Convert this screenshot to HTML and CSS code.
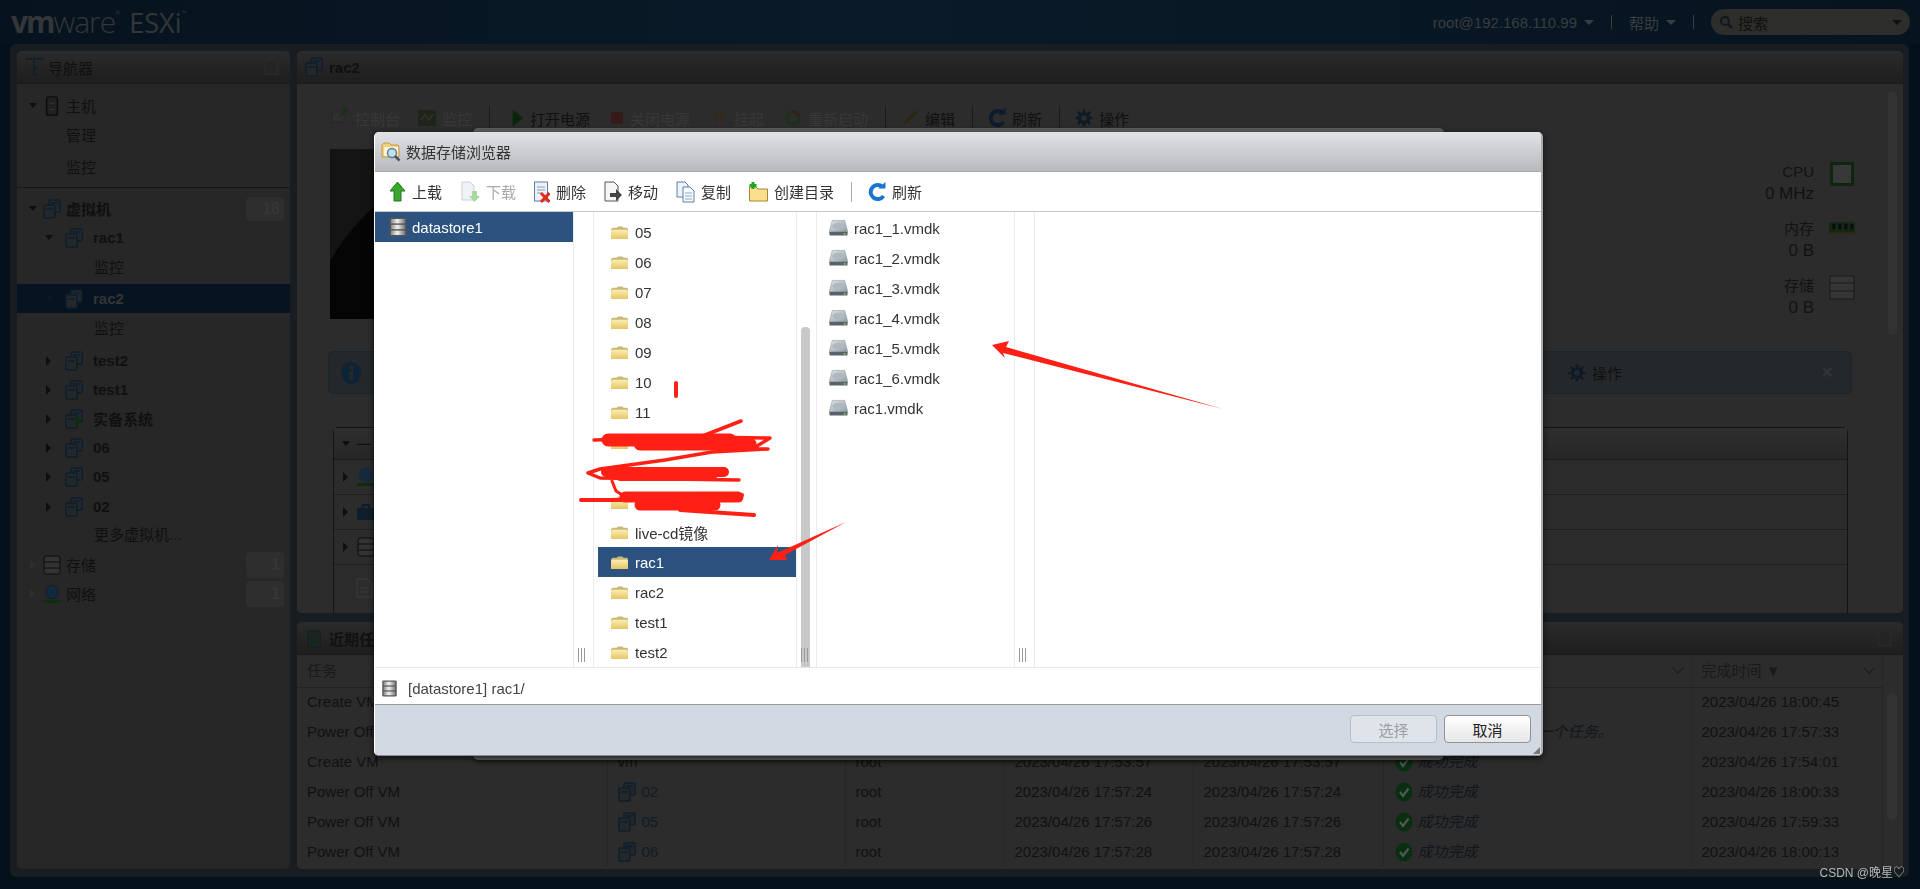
FILE: index.html
```html
<!DOCTYPE html>
<html lang="zh-CN">
<head>
    <meta charset="UTF-8">
    <meta name="viewport" content="width=device-width, initial-scale=1.0">
    <title>vmware ESXi</title>
    <link rel="stylesheet" href="styles.css">
</head>
<body>
    <!-- shared icons -->
    <svg class="icon-defs" width="0" height="0">
        <defs>
            <linearGradient id="g-folder" x1="0" y1="0" x2="0" y2="1">
                <stop offset="0" stop-color="#fbeeb0"/>
                <stop offset="1" stop-color="#e6c566"/>
            </linearGradient>
            <linearGradient id="g-disk" x1="0" y1="0" x2="1" y2="1">
                <stop offset="0" stop-color="#dfe4e7"/>
                <stop offset="1" stop-color="#8e9aa3"/>
            </linearGradient>
            <linearGradient id="g-store" x1="0" y1="0" x2="1" y2="0">
                <stop offset="0" stop-color="#8a8a8a"/>
                <stop offset="0.45" stop-color="#f2f2f2"/>
                <stop offset="1" stop-color="#777"/>
            </linearGradient>
            <symbol id="i-folder" viewBox="0 0 20 16">
                <path d="M1 15V4.500L2.500 3H7L8.500 1.500H13L14.500 3H18L19 4V15Z" fill="#c9b878"/>
                <path d="M1 15V6.500L2 5H18L19 6.500V15Z" fill="url(#g-folder)"/>
            </symbol>
            <symbol id="i-disk" viewBox="0 0 20 18">
                <path d="M3.500 1H16.500L19.500 12V14H0.500V12Z" fill="url(#g-disk)" stroke="#8a949b" stroke-width="0.600"/>
                <ellipse cx="10" cy="7" rx="6.500" ry="3.500" fill="#aeb8bf"/>
                <rect x="0.500" y="13" width="19" height="4" rx="1" fill="#59626a"/>
                <rect x="15.500" y="14.500" width="2" height="1.500" fill="#7ed257"/>
            </symbol>
            <symbol id="i-store" viewBox="0 0 18 20">
                <rect x="0.500" y="0.500" width="17" height="19" rx="1.500" fill="#555"/>
                <rect x="2" y="2" width="14" height="4.400" fill="url(#g-store)"/>
                <rect x="2" y="7.800" width="14" height="4.400" fill="url(#g-store)"/>
                <rect x="2" y="13.600" width="14" height="4.400" fill="url(#g-store)"/>
            </symbol>
            <symbol id="i-vm" viewBox="0 0 18 20">
                <rect x="6" y="1" width="11" height="12" rx="1" fill="#23282b" stroke="#0f1e2c" stroke-width="1.500"/>
                <rect x="1" y="6" width="11" height="13" rx="1" fill="#23282b" stroke="#0f1e2c" stroke-width="1.500"/>
                <path d="M3 10H10M8 4H15" stroke="#0f1e2c" stroke-width="1.500"/>
            </symbol>
            <symbol id="i-check" viewBox="0 0 18 20">
                <ellipse cx="9" cy="10" rx="8.500" ry="9.500" fill="#0a2e10"/>
                <path d="M5 10L8 14L13.500 6.500" fill="none" stroke="#4f5a55" stroke-width="2.200"/>
            </symbol>
            <symbol id="i-refresh" viewBox="0 0 18 20">
                <path d="M14.500 5A7 7 0 1 0 15.500 14" fill="none" stroke="currentColor" stroke-width="4"/>
                <path d="M10 6.500H17.500V0Z" fill="currentColor"/>
            </symbol>
            <symbol id="i-gear" viewBox="0 0 20 20">
                <path d="M10 3.500A6.500 6.500 0 1 0 10 16.500A6.500 6.500 0 1 0 10 3.500ZM10 7A3 3 0 1 1 10 13A3 3 0 1 1 10 7Z" fill="#0e1b27" fill-rule="evenodd"/>
                <path d="M10 0.500V5M10 15V19.500M0.500 10H5M15 10H19.500M3.200 3.200L6.300 6.300M13.700 13.700L16.800 16.800M16.800 3.200L13.700 6.300M6.300 13.700L3.200 16.800" stroke="#0e1b27" stroke-width="3"/>
            </symbol>
        </defs>
    </svg>

    <header class="topbar">
        <div class="logo"><span class="logo-vm">vm</span><span class="logo-ware">ware</span><sup class="logo-r">®</sup><span class="logo-esxi">ESXi</span><sup class="logo-tm">™</sup></div>
        <div class="topbar-right">
            <span class="top-link">root@192.168.110.99<i class="top-caret"></i></span>
            <span class="top-sep"></span>
            <span class="top-link">帮助<i class="top-caret"></i></span>
            <span class="top-sep"></span>
            <div class="search">
                <svg class="search-icon" viewBox="0 0 14 14"><circle cx="6" cy="6" r="4" fill="none" stroke="#12181c" stroke-width="2"/><path d="M9 9L13 13" stroke="#12181c" stroke-width="2.500"/></svg>
                <span class="search-text">搜索</span>
                <i class="search-caret"></i>
            </div>
        </div>
    </header>

    <div class="shell">
        <aside class="panel nav">
            <div class="panel-title">
                <svg class="title-icon" viewBox="0 0 20 22"><path d="M1 2H20M10 4V20M10 12H15M10 20H15" stroke="#0f1e2c" stroke-width="2.500" stroke-dasharray="3 1"/></svg>
                <span>导航器</span>
                <i class="pin"></i>
            </div>
            <div class="tree">
                <div class="tree-row first"><i class="caret down"></i><svg class="ico" viewBox="0 0 18 22"><rect x="3" y="1" width="12" height="20" rx="2" fill="#202020" stroke="#0c0c0c" stroke-width="1.500"/><path d="M6 8H12M6 15H12" stroke="#3a3a3a"/></svg><span>主机</span></div>
                <div class="tree-row sub0"><span>管理</span></div>
                <div class="tree-row sub0 gap3"><span>监控</span></div>
                <div class="tree-line"></div>
                <div class="tree-row bold"><i class="caret down"></i><svg class="ico"><use href="#i-vm"/></svg><span>虚拟机</span><b class="badge tall">18</b></div>
                <div class="tree-row depth1 bold"><i class="caret down"></i><svg class="ico"><use href="#i-vm"/></svg><span>rac1</span></div>
                <div class="tree-row sub1"><span>监控</span></div>
                <div class="tree-row depth1 bold selected gap3"><i class="caret down faint"></i><svg class="ico"><use href="#i-vm"/></svg><span>rac2</span></div>
                <div class="tree-row sub1"><span>监控</span></div>
                <div class="tree-row depth1 bold gap4"><i class="caret right"></i><svg class="ico"><use href="#i-vm"/></svg><span>test2</span></div>
                <div class="tree-row depth1 bold"><i class="caret right"></i><svg class="ico"><use href="#i-vm"/></svg><span>test1</span></div>
                <div class="tree-row depth1 bold"><i class="caret right"></i><svg class="ico" viewBox="0 0 18 20"><use href="#i-vm"/><path d="M10 6L17 12L10 18Z" fill="#0e2e0e"/></svg><span>实备系统</span></div>
                <div class="tree-row depth1 bold"><i class="caret right"></i><svg class="ico"><use href="#i-vm"/></svg><span>06</span></div>
                <div class="tree-row depth1 bold"><i class="caret right"></i><svg class="ico"><use href="#i-vm"/></svg><span>05</span></div>
                <div class="tree-row depth1 bold gap1"><i class="caret right"></i><svg class="ico"><use href="#i-vm"/></svg><span>02</span></div>
                <div class="tree-row sub1 more"><span>更多虚拟机...</span></div>
                <div class="tree-row gap2"><i class="caret right faint2"></i><svg class="ico" viewBox="0 0 18 20"><rect x="1" y="1" width="16" height="18" rx="2" fill="#333" stroke="#0d0d0d"/><path d="M1 7H17M1 13H17" stroke="#0d0d0d"/></svg><span>存储</span><b class="badge">1</b></div>
                <div class="tree-row"><i class="caret right faint2"></i><svg class="ico" viewBox="0 0 20 20"><ellipse cx="10" cy="8" rx="7" ry="7.500" fill="#15293d" stroke="#0e1c2a"/><rect x="1" y="17" width="18" height="3" fill="#0c2e0d"/></svg><span>网络</span><b class="badge">1</b></div>
            </div>
        </aside>

        <main class="main">
            <section class="panel summary-panel">
                <div class="panel-title">
                    <svg class="title-icon"><use href="#i-vm"/></svg>
                    <span class="bold-text">rac2</span>
                </div>
                <div class="summary-body">
                    <div class="vm-toolbar">
                        <span class="tool dim first-tool"><svg class="t-ico" viewBox="0 0 18 20"><rect x="1" y="4" width="12" height="10" fill="#303030" stroke="#252525"/><path d="M9 8L16 1M11 1H16V6" stroke="#1c2e1a" stroke-width="2" fill="none"/></svg>控制台</span>
                        <span class="tool dim"><svg class="t-ico" viewBox="0 0 18 20"><rect x="0" y="2" width="18" height="16" fill="#1e241b"/><path d="M3 12L7 7L11 12L15 6" stroke="#2c3326" stroke-width="2" fill="none"/></svg>监控</span>
                        <i class="tool-sep wide"></i>
                        <span class="tool"><svg class="t-ico play" viewBox="0 0 12 20"><path d="M1 2L11 10L1 18Z" fill="#0c240e" stroke="#0b2c0e"/></svg>打开电源</span>
                        <span class="tool dim"><svg class="t-ico stop" viewBox="0 0 14 20"><rect x="1" y="4" width="12" height="12" fill="#351a1a"/></svg>关闭电源</span>
                        <span class="tool dim"><svg class="t-ico" viewBox="0 0 17 20"><path d="M4 4H7V16H4ZM10 4H13V16H10Z" fill="#33291a"/></svg>挂起</span>
                        <span class="tool dim"><svg class="t-ico" viewBox="0 0 17 20"><circle cx="8.500" cy="10" r="6" fill="none" stroke="#1e2f1c" stroke-width="3.500"/><path d="M8 4A6 6 0 0 1 14 8" stroke="#33201b" stroke-width="3.500" fill="none"/></svg>重新启动</span>
                        <i class="tool-sep"></i>
                        <span class="tool"><svg class="t-ico" viewBox="0 0 19 20"><path d="M2 18L4 13L15 2L18 4L7 15Z" fill="#2e2512"/></svg>编辑</span>
                        <i class="tool-sep"></i>
                        <span class="tool"><svg class="t-ico navy" viewBox="0 0 18 20"><use href="#i-refresh"/></svg>刷新</span>
                        <i class="tool-sep"></i>
                        <span class="tool"><svg class="t-ico" viewBox="0 0 20 20"><use href="#i-gear"/></svg>操作</span>
                    </div>

                    <div class="summary-row">
                        <div class="thumb"></div>
                        <div class="stats">
                            <div class="stat"><div class="stat-text"><div>CPU</div><div class="stat-value">0 MHz</div></div><svg class="stat-icon" viewBox="0 0 26 26"><rect x="1" y="1" width="24" height="24" fill="#102510"/><rect x="4" y="4" width="18" height="18" fill="#383838"/></svg></div>
                            <div class="stat"><div class="stat-text"><div>内存</div><div class="stat-value">0 B</div></div><svg class="stat-icon" viewBox="0 0 30 26"><rect x="0" y="3" width="30" height="11" fill="#142614"/><path d="M4 5H7V11H4ZM11 5H14V11H11ZM18 5H21V11H18ZM25 5H28V11H25Z" fill="#0b0b0b"/><rect x="0" y="14" width="30" height="2.500" fill="#2a2810"/></svg></div>
                            <div class="stat"><div class="stat-text"><div>存储</div><div class="stat-value">0 B</div></div><svg class="stat-icon" viewBox="0 0 26 26"><rect x="1" y="1" width="24" height="23" fill="#363636" stroke="#181818"/><path d="M1 8H25M1 16H25" stroke="#181818"/></svg></div>
                        </div>
                        <div class="panel-scroll"></div>
                    </div>

                    <div class="info-bar">
                        <svg class="info-icon" viewBox="0 0 20 22"><ellipse cx="10" cy="11" rx="10" ry="11" fill="#0f2336"/><rect x="8.500" y="9" width="3.500" height="9" fill="#25292c"/><rect x="8.500" y="4" width="3.500" height="3.500" fill="#25292c"/></svg>
                        <span class="info-right"><svg class="t-ico" viewBox="0 0 20 20"><use href="#i-gear"/></svg>操作</span>
                        <span class="info-close">×</span>
                    </div>

                    <div class="portlet">
                        <div class="portlet-head"><i class="caret down"></i><span>一</span></div>
                        <div class="portlet-row"><i class="caret right"></i><svg class="p-ico" viewBox="0 0 20 20"><ellipse cx="10" cy="8" rx="7" ry="7.500" fill="#15293d"/><rect x="1" y="16" width="18" height="3" fill="#0c2e0d"/></svg></div>
                        <div class="portlet-row"><i class="caret right"></i><svg class="p-ico" viewBox="0 0 20 20"><rect x="1" y="6" width="18" height="12" rx="1" fill="#0f1e2c"/><path d="M7 6V3H13V6" fill="none" stroke="#0f1e2c" stroke-width="2"/></svg></div>
                        <div class="portlet-row"><i class="caret right"></i><svg class="p-ico" viewBox="0 0 20 20"><rect x="2" y="1" width="16" height="18" rx="2" fill="#333" stroke="#0d0d0d"/><path d="M2 7H18M2 13H18" stroke="#0d0d0d"/></svg></div>
                        <div class="portlet-row note"><svg class="p-ico" viewBox="0 0 20 20"><path d="M3 1H13L18 6V19H3Z" fill="none" stroke="#3d3d3d"/><path d="M6 10H15M6 14H15" stroke="#3d3d3d"/></svg></div>
                    </div>
                </div>
            </section>

            <section class="panel tasks-panel">
                <div class="panel-title">
                    <svg class="title-icon" viewBox="0 0 16 22"><rect x="1" y="3" width="14" height="18" rx="2" fill="#1e2422" stroke="#0f1e2c"/><path d="M4 9L6 12L10 7M4 15L6 18L10 13" stroke="#0e2e0e" fill="none" stroke-width="1.500"/></svg>
                    <span class="bold-text">近期任务</span>
                    <i class="pin"></i>
                </div>
                <div class="tasks-wrap">
                    <table class="tasks">
                        <colgroup><col class="c1"><col class="c2"><col class="c3"><col class="c4"><col class="c5"><col class="c6"><col class="c7"></colgroup>
                        <thead>
                            <tr><th>任务</th><th></th><th></th><th></th><th></th><th><i class="th-chev"></i></th><th>完成时间 ▼<i class="th-chev"></i></th></tr>
                        </thead>
                        <tbody>
                            <tr><td>Create VM</td><td></td><td></td><td></td><td></td><td></td><td>2023/04/26 18:00:45</td></tr>
                            <tr><td>Power Off VM</td><td></td><td></td><td></td><td></td><td class="result"><svg class="ok"><use href="#i-check"/></svg>此对象正在运行另一个任务。</td><td>2023/04/26 17:57:33</td></tr>
                            <tr><td>Create VM</td><td>vm</td><td>root</td><td>2023/04/26 17:53:57</td><td>2023/04/26 17:53:57</td><td class="result"><svg class="ok"><use href="#i-check"/></svg>成功完成</td><td>2023/04/26 17:54:01</td></tr>
                            <tr><td>Power Off VM</td><td class="target"><svg class="vm-mini"><use href="#i-vm"/></svg>02</td><td>root</td><td>2023/04/26 17:57:24</td><td>2023/04/26 17:57:24</td><td class="result"><svg class="ok"><use href="#i-check"/></svg>成功完成</td><td>2023/04/26 18:00:33</td></tr>
                            <tr><td>Power Off VM</td><td class="target"><svg class="vm-mini"><use href="#i-vm"/></svg>05</td><td>root</td><td>2023/04/26 17:57:26</td><td>2023/04/26 17:57:26</td><td class="result"><svg class="ok"><use href="#i-check"/></svg>成功完成</td><td>2023/04/26 17:59:33</td></tr>
                            <tr><td>Power Off VM</td><td class="target"><svg class="vm-mini"><use href="#i-vm"/></svg>06</td><td>root</td><td>2023/04/26 17:57:28</td><td>2023/04/26 17:57:28</td><td class="result"><svg class="ok"><use href="#i-check"/></svg>成功完成</td><td>2023/04/26 18:00:13</td></tr>
                        </tbody>
                    </table>
                    <div class="tasks-scroll"></div>
                </div>
            </section>
        </main>
    </div>

    <div class="under-dialog"></div>

    <div class="dialog">
        <div class="dialog-title">
            <svg class="dialog-icon" viewBox="0 0 20 20"><path d="M1 15V3L3 1H8L10 3H17L18 5V15Z" fill="#f3d27e" stroke="#c89a45"/><rect x="3" y="5" width="14" height="9" fill="#fff6d8"/><circle cx="11" cy="11" r="4.500" fill="#bfe0f2" stroke="#5f7f95" stroke-width="1.500"/><path d="M14 14L18.500 18.500" stroke="#4a5560" stroke-width="2.500"/></svg>
            <span>数据存储浏览器</span>
        </div>
        <div class="dialog-toolbar">
            <span class="d-tool"><svg class="w-up" viewBox="0 0 17 22"><path d="M8.500 1L16 10H12V20H5V10H1Z" fill="#39a52d" stroke="#1d7a1a"/></svg>上载</span>
            <span class="d-tool off"><svg class="w-down" viewBox="0 0 20 22"><path d="M2 1H10L14 5V19H2Z" fill="#eef3f8" stroke="#c3d0dc"/><path d="M12 10H17V15H20L14.500 21L9 15H12Z" fill="#a6d8a0"/></svg>下载</span>
            <span class="d-tool"><svg class="w-del" viewBox="0 0 16 22"><rect x="0.500" y="1" width="13" height="19" fill="#eef2f7" stroke="#5d7fa6"/><path d="M3 6H11M3 9H11M3 12H8" stroke="#8d9bab"/><path d="M7 12L15.500 21M15.500 12L7 21" stroke="#e32b1c" stroke-width="3"/></svg>删除</span>
            <span class="d-tool"><svg class="w-mv" viewBox="0 0 18 22"><path d="M1 1H10L14 5V20H1Z" fill="#f5f5f5" stroke="#555"/><path d="M6 12H12V8L18 14L12 20V16H6Z" fill="#444"/></svg>移动</span>
            <span class="d-tool"><svg class="w-cp" viewBox="0 0 19 22"><path d="M1 1H9L12 4V16H1Z" fill="#eef3f9" stroke="#5d7fa6"/><path d="M7 6H14L18 10V21H7Z" fill="#f7fafd" stroke="#5d7fa6"/><path d="M9 12H16M9 15H16M9 18H16" stroke="#8da6c2"/></svg>复制</span>
            <span class="d-tool"><svg class="w-mk" viewBox="0 0 19 22"><path d="M0.500 20V6H7L9 8H18.500V20Z" fill="#fbe08b" stroke="#a8843a"/><path d="M4 1V8M0.500 4.500H7.500" stroke="#1fa32a" stroke-width="3"/></svg>创建目录</span>
            <i class="d-sep"></i>
            <span class="d-tool"><svg class="w-rf" viewBox="0 0 18 20"><use href="#i-refresh"/></svg>刷新</span>
        </div>
        <div class="browser">
            <div class="b-col stores">
                <div class="b-item selected"><svg class="store-ico"><use href="#i-store"/></svg>datastore1</div>
            </div>
            <div class="b-strip"><i class="grip"></i></div>
            <div class="b-col folders">
                <div class="b-item"><svg class="folder"><use href="#i-folder"/></svg>05</div>
                <div class="b-item"><svg class="folder"><use href="#i-folder"/></svg>06</div>
                <div class="b-item"><svg class="folder"><use href="#i-folder"/></svg>07</div>
                <div class="b-item"><svg class="folder"><use href="#i-folder"/></svg>08</div>
                <div class="b-item"><svg class="folder"><use href="#i-folder"/></svg>09</div>
                <div class="b-item"><svg class="folder"><use href="#i-folder"/></svg>10</div>
                <div class="b-item"><svg class="folder"><use href="#i-folder"/></svg>11</div>
                <div class="b-item"><svg class="folder"><use href="#i-folder"/></svg></div>
                <div class="b-item"><svg class="folder"><use href="#i-folder"/></svg></div>
                <div class="b-item"><svg class="folder"><use href="#i-folder"/></svg></div>
                <div class="b-item"><svg class="folder"><use href="#i-folder"/></svg>live-cd镜像</div>
                <div class="b-item selected"><svg class="folder"><use href="#i-folder"/></svg>rac1</div>
                <div class="b-item"><svg class="folder"><use href="#i-folder"/></svg>rac2</div>
                <div class="b-item"><svg class="folder"><use href="#i-folder"/></svg>test1</div>
                <div class="b-item"><svg class="folder"><use href="#i-folder"/></svg>test2</div>
            </div>
            <div class="b-strip"><i class="b-thumb"></i><i class="grip"></i></div>
            <div class="b-col files">
                <div class="b-item"><svg class="disk"><use href="#i-disk"/></svg>rac1_1.vmdk</div>
                <div class="b-item"><svg class="disk"><use href="#i-disk"/></svg>rac1_2.vmdk</div>
                <div class="b-item"><svg class="disk"><use href="#i-disk"/></svg>rac1_3.vmdk</div>
                <div class="b-item"><svg class="disk"><use href="#i-disk"/></svg>rac1_4.vmdk</div>
                <div class="b-item"><svg class="disk"><use href="#i-disk"/></svg>rac1_5.vmdk</div>
                <div class="b-item"><svg class="disk"><use href="#i-disk"/></svg>rac1_6.vmdk</div>
                <div class="b-item"><svg class="disk"><use href="#i-disk"/></svg>rac1.vmdk</div>
            </div>
            <div class="b-strip"><i class="grip"></i></div>
        </div>
        <div class="dialog-path"><svg class="path-ico"><use href="#i-store"/></svg>[datastore1] rac1/</div>
        <div class="dialog-foot">
            <button type="button" class="btn" disabled>选择</button>
            <button type="button" class="btn primary">取消</button>
            <svg class="resize-grip" viewBox="0 0 8 8"><path d="M8 0V8H0Z" fill="#777"/></svg>
        </div>
    </div>

    <!-- red marks drawn over the screenshot -->
    <svg class="marks" viewBox="0 0 1920 889">
        <path d="M769 560L778 545L777 553L846 522L785 555L787 560Z"/>
        <path d="M992 345L1009 341L1006 347L1223 409L1003 353L1005 358Z"/>
        <g class="scribble">
            <path d="M676 383V396" stroke-width="4"/>
            <path d="M608 440H730M640 444H750" stroke-width="13"/>
            <path d="M594 440L700 437L741 421M700 437L770 438L752 449L768 449L712 452L665 460L600 469L588 473L600 478L739 480" stroke-width="3.500"/>
            <path d="M606 472H724M620 476H712" stroke-width="10"/>
            <path d="M612 481L616 491L624 496" stroke-width="3"/>
            <path d="M625 497H738M640 505H715" stroke-width="11"/>
            <path d="M581 500H740M680 510L754 515M700 494L742 495" stroke-width="4"/>
        </g>
    </svg>

    <div class="watermark">CSDN @晚星♡</div>
</body>
</html>
```
FILE: styles.css
```css
:root {
    --page: #04101a;
    --frame: #171d20;
    --panel: #2c2c2c;
    --nav: #272727;
    --ink: #101010;
    --dim-ink: #383838;
    --blue: #2c5280;
    --red: #fe2014;
}

body {
    margin: 0;
    height: 889px;
    overflow: hidden;
    background: var(--page);
    font-family: "Liberation Sans", "Noto Sans CJK SC", sans-serif;
    font-size: 15px;
    color: var(--ink);
}

.icon-defs {
    display: block;
    height: 0;
}

/* top bar */
.topbar {
    height: 44px;
    display: flex;
    align-items: center;
    justify-content: space-between;
    background: linear-gradient(90deg, #06131e 0%, #0a1a28 45%, #06141f 100%);
}

.logo {
    display: flex;
    align-items: baseline;
    margin-left: 11px;
    color: #343638;
    font-family: "Open Sans", sans-serif;
    font-size: 30px;
    line-height: 34px;
}

.logo-vm {
    font-weight: 700;
    letter-spacing: -2px;
}

.logo-ware {
    font-weight: 300;
    letter-spacing: -1px;
}

.logo-esxi {
    margin-left: 9px;
    font-size: 27px;
}

.logo-r,
.logo-tm {
    font-size: 6px;
    line-height: 16px;
    align-self: flex-start;
}

.topbar-right {
    display: flex;
    align-items: center;
    margin-right: 10px;
    color: #3a3d3f;
}

.top-link {
    display: flex;
    align-items: center;
}

.top-caret,
.search-caret {
    width: 0;
    height: 0;
    margin-left: 7px;
    border-left: 5px solid transparent;
    border-right: 5px solid transparent;
    border-top: 5px solid #3a3d3f;
}

.top-sep {
    width: 1px;
    height: 14px;
    margin: 0 17px;
    background: #3a3d3f;
}

.search {
    width: 199px;
    height: 26px;
    display: flex;
    align-items: center;
    box-sizing: border-box;
    padding: 0 8px;
    border-radius: 13px;
    background: #2d2d2b;
}

.search-icon {
    width: 14px;
    height: 14px;
    margin-right: 5px;
}

.search-text {
    flex: 1;
    color: #101010;
}

.search-caret {
    border-top-color: #101010;
}

/* frame and panels */
.shell {
    display: flex;
    gap: 7px;
    width: 1899px;
    height: 833px;
    margin-left: 10px;
    box-sizing: border-box;
    padding: 7px 6px 8px 7px;
    border-radius: 6px;
    background: var(--frame);
}

.panel {
    display: flex;
    flex-direction: column;
    border-radius: 5px;
    overflow: hidden;
    background: var(--panel);
}

.panel-title {
    flex: none;
    height: 33px;
    display: flex;
    align-items: center;
    padding-left: 8px;
    background: linear-gradient(#2b2b2b, #1e1e1e);
    border-bottom: 1px solid #1a1a1a;
    box-sizing: border-box;
}

.title-icon {
    width: 18px;
    height: 20px;
    margin-right: 6px;
}

.bold-text {
    font-weight: bold;
}

.pin {
    width: 11px;
    height: 13px;
    margin: 0 12px 0 auto;
    border: 1px solid #2a2a2a;
    background: #242424;
}

/* navigator */
.nav {
    width: 273px;
    background: var(--nav);
}

.nav .title-icon {
    width: 20px;
    margin-right: 4px;
    margin-left: -1px;
}

.tree {
    padding-top: 7px;
}

.tree-row {
    height: 29px;
    display: flex;
    align-items: center;
    padding: 0 6px 0 12px;
    box-sizing: border-box;
    white-space: nowrap;
}

.bold {
    font-weight: bold;
}

.depth1 {
    padding-left: 28px;
}

.caret {
    flex: none;
    width: 0;
    height: 0;
    margin-right: 6px;
}

.caret.down {
    border-left: 4px solid transparent;
    border-right: 4px solid transparent;
    border-top: 5px solid #0e0e0e;
}

.caret.right {
    margin-left: 1px;
    margin-right: 8px;
    border-top: 5px solid transparent;
    border-bottom: 5px solid transparent;
    border-left: 5px solid #0e0e0e;
}

.caret.faint {
    border-top-color: #0b1722;
}

.caret.faint2 {
    border-left-color: #2f2f2f;
}

.ico {
    flex: none;
    width: 18px;
    height: 20px;
    margin-right: 5px;
}

.depth1 .caret {
    margin-right: 12px;
}

.depth1 .caret.right {
    margin-right: 14px;
}

.depth1 .ico {
    margin-right: 10px;
}

.sub0 {
    padding-left: 49px;
}

.sub1 {
    padding-left: 77px;
}

.gap1 {
    margin-top: 1px;
}

.gap2 {
    margin-top: 2px;
}

.gap3 {
    margin-top: 3px;
}

.gap4 {
    margin-top: 4px;
}

.more {
    margin-top: -2px;
}

.tree-line {
    height: 1px;
    margin: 6px 0;
    background: #161616;
}

.tree-row.selected {
    background: #061421;
    color: #353535;
}

.badge {
    width: 38px;
    height: 26px;
    margin-left: auto;
    padding-right: 4px;
    box-sizing: border-box;
    border-radius: 4px;
    background: #2e2e2e;
    color: #363636;
    font-size: 16px;
    line-height: 26px;
    text-align: right;
}

.badge.tall {
    height: 24px;
    line-height: 24px;
}

/* main area */
.main {
    flex: 1;
    display: flex;
    flex-direction: column;
    gap: 9px;
    min-width: 0;
}

.summary-panel {
    height: 562px;
}

.summary-body {
    padding-top: 22px;
}

.vm-toolbar {
    height: 24px;
    display: flex;
    align-items: center;
    padding-left: 34px;
}

.tool {
    display: flex;
    align-items: center;
    margin-right: 20px;
    white-space: nowrap;
}

.tool.dim {
    color: var(--dim-ink);
}

.first-tool {
    margin-right: 18px;
}

.t-ico {
    width: 18px;
    height: 20px;
    margin-right: 6px;
}

.t-ico.play {
    width: 12px;
}

.t-ico.stop {
    width: 14px;
}

.t-ico.navy {
    color: #0c1c2c;
}

.tool-sep {
    width: 1px;
    height: 24px;
    margin: 0 15px 0 -3px;
    background: #1c1c1c;
}

.tool-sep.wide {
    margin-right: 22px;
}

.summary-row {
    height: 170px;
    display: flex;
    margin-top: 19px;
    padding-left: 33px;
}

.thumb {
    width: 190px;
    background: radial-gradient(circle 219px at 190px 220px, #050505 99.500%, #141414 100%);
}

.stats {
    margin-left: auto;
    margin-top: 12px;
    width: 170px;
    margin-right: 48px;
}

.stat {
    height: 57px;
    display: flex;
    justify-content: flex-end;
    color: #121212;
}

.stat-text {
    text-align: right;
    line-height: 22px;
}

.stat-value {
    font-size: 17px;
}

.stat-icon {
    width: 26px;
    height: 26px;
    margin-left: 15px;
}

.panel-scroll {
    flex: none;
    width: 9px;
    height: 244px;
    margin: -58px 6px 0 -15px;
    border-radius: 5px;
    background: #323232;
}

.info-bar {
    height: 43px;
    display: flex;
    align-items: center;
    margin: 32px 51px 0 31px;
    padding: 0 18px 0 12px;
    box-sizing: border-box;
    border: 1px solid #182533;
    border-radius: 5px;
    background: #25282a;
}

.info-icon {
    width: 20px;
    height: 22px;
}

.info-right {
    display: flex;
    align-items: center;
    margin-left: 1207px;
}

.info-close {
    margin-left: auto;
    color: #303436;
    font-size: 20px;
    font-weight: bold;
}

.portlet {
    margin: 33px 55px 0 36px;
    height: 190px;
    border: 1px solid #141414;
    border-radius: 5px 5px 0 0;
}

.portlet-head {
    height: 31px;
    display: flex;
    align-items: center;
    padding-left: 8px;
    border-bottom: 1px solid #1a1a1a;
    background: linear-gradient(#2f2f2f, #262626);
}

.portlet-row {
    height: 34px;
    display: flex;
    align-items: center;
    padding-left: 8px;
    border-bottom: 1px solid #1f1f1f;
}

.portlet-row.note {
    padding-left: 20px;
    height: 45px;
    border-bottom: none;
}

.p-ico {
    width: 20px;
    height: 20px;
}

/* tasks */
.tasks-panel {
    flex: 1;
    min-height: 0;
}

.tasks-wrap {
    flex: 1;
    display: flex;
    min-height: 0;
    overflow: hidden;
}

.tasks {
    width: 1585px;
    flex: none;
    align-self: flex-start;
    table-layout: fixed;
    border-collapse: collapse;
    line-height: 20px;
}

.c1 { width: 310px; }
.c2 { width: 238px; }
.c3 { width: 159px; }
.c4 { width: 189px; }
.c5 { width: 190px; }
.c6 { width: 308px; }
.c7 { width: 191px; }

.tasks th {
    position: relative;
    height: 32px;
    padding: 0 10px;
    box-sizing: border-box;
    border-bottom: 1px solid #222;
    border-right: 1px solid #262626;
    font-weight: normal;
    text-align: left;
    color: #191919;
}

.th-chev {
    position: absolute;
    right: 9px;
    top: 9px;
    width: 7px;
    height: 7px;
    transform: rotate(45deg);
    border-right: 1.500px solid #1c1c1c;
    border-bottom: 1.500px solid #1c1c1c;
}

.tasks td {
    height: 30px;
    padding: 0 10px;
    box-sizing: border-box;
    border-right: 1px solid #262626;
    white-space: nowrap;
    color: #111;
}

.tasks .target {
    color: #0e1b28;
}

.vm-mini {
    width: 18px;
    height: 20px;
    margin-right: 6px;
    vertical-align: top;
}

.tasks .result {
    font-style: italic;
    color: #10161c;
}

.ok {
    width: 18px;
    height: 20px;
    margin: 0 5px 0 1px;
    vertical-align: top;
}

.tasks-scroll {
    flex: none;
    width: 10px;
    height: 127px;
    margin: 38px 0 0 4px;
    border-radius: 5px;
    background: #323232;
}

/* dialog */
.under-dialog {
    position: fixed;
    left: 473px;
    top: 128px;
    width: 971px;
    height: 632px;
    border-radius: 5px;
    background: #5c5c5c;
    box-shadow: 0 2px 4px rgba(0, 0, 0, 0.6);
}

.dialog {
    position: fixed;
    left: 374px;
    top: 132px;
    width: 1169px;
    height: 624px;
    display: flex;
    flex-direction: column;
    box-sizing: border-box;
    border-left: 1px solid #fff;
    border-right: 2px solid #a9abae;
    border-bottom: 1px solid #8a8d90;
    border-radius: 5px;
    overflow: hidden;
    background: #fff;
    box-shadow: 0 2px 6px rgba(0, 0, 0, 0.7);
    color: #333;
}

.dialog-title {
    flex: none;
    height: 40px;
    display: flex;
    align-items: center;
    box-sizing: border-box;
    padding-left: 6px;
    border-bottom: 1px solid #a9aaac;
    background: linear-gradient(#e2e3e7, #b8b9bc);
}

.dialog-icon {
    width: 20px;
    height: 20px;
    margin-right: 5px;
}

.dialog-toolbar {
    flex: none;
    height: 40px;
    display: flex;
    align-items: center;
    box-sizing: border-box;
    padding-left: 14px;
    border-bottom: 1px solid #c9c9c9;
}

.d-tool {
    display: flex;
    align-items: center;
    margin-right: 18px;
    white-space: nowrap;
}

.d-tool svg {
    height: 22px;
    margin-right: 6px;
}

.d-tool.off {
    color: #aaa;
}

.w-up { width: 17px; }
.w-down { width: 20px; }
.w-del { width: 16px; }
.w-mv { width: 18px; }
.w-cp { width: 19px; }
.w-mk { width: 19px; }

.w-rf {
    width: 18px;
    color: #1a74d2;
}

.d-sep {
    width: 1px;
    height: 20px;
    margin: 0 16px 0 -1px;
    background: #aaa;
}

.browser {
    flex: 1;
    min-height: 0;
    display: flex;
    border-bottom: 1px solid #e8e8e8;
}

.b-col {
    flex: none;
    overflow: hidden;
    box-sizing: border-box;
    border-right: 1px solid #ececec;
}

.stores {
    width: 199px;
}

.folders {
    width: 203px;
    padding: 5px 0 0 4px;
}

.files {
    width: 198px;
    padding-top: 1px;
}

.b-strip {
    flex: none;
    position: relative;
    width: 20px;
    box-sizing: border-box;
    border-right: 1px solid #ececec;
}

.grip {
    position: absolute;
    left: 4px;
    bottom: 5px;
    width: 8px;
    height: 14px;
    background: repeating-linear-gradient(90deg, #999 0 1px, transparent 1px 3px);
}

.b-thumb {
    position: absolute;
    left: 4px;
    right: 6px;
    top: 115px;
    bottom: 0;
    border-radius: 4px 4px 0 0;
    background: #c8c8c8;
}

.b-item {
    height: 30px;
    flex: none;
    display: flex;
    align-items: center;
    white-space: nowrap;
}

.b-item.selected {
    background: var(--blue);
    color: #fff;
}

.stores .b-item {
    padding-left: 14px;
}

.folders .b-item,
.files .b-item {
    padding-left: 12px;
}

.store-ico {
    width: 18px;
    height: 20px;
    margin-right: 5px;
}

.folder {
    flex: none;
    width: 19px;
    height: 15px;
    margin-right: 6px;
}

.disk {
    flex: none;
    width: 19px;
    height: 18px;
    margin-right: 6px;
}

.dialog-path {
    flex: none;
    height: 37px;
    display: flex;
    align-items: center;
    box-sizing: border-box;
    padding: 4px 0 0 6px;
    border-bottom: 1px solid #9a9a9a;
    color: #444;
}

.path-ico {
    width: 17px;
    height: 17px;
    margin-right: 10px;
}

.dialog-foot {
    flex: none;
    height: 50px;
    box-sizing: border-box;
    display: flex;
    justify-content: flex-end;
    align-items: flex-start;
    gap: 7px;
    padding: 10px 10px 0 0;
    position: relative;
    background: #d2d9e2;
}

.btn {
    width: 87px;
    height: 28px;
    padding: 0;
    border: 1px solid #b7bec6;
    border-radius: 4px;
    background: #dfe3ea;
    color: #9a9ea3;
    font: inherit;
}

.btn.primary {
    border-color: #8f9296;
    background: linear-gradient(#fff, #e6e6e6);
    color: #222;
}

.resize-grip {
    position: absolute;
    right: 1px;
    bottom: 1px;
    width: 7px;
    height: 7px;
}

/* annotations */
.marks {
    position: fixed;
    left: 0;
    top: 0;
    width: 1920px;
    height: 889px;
    fill: var(--red);
    pointer-events: none;
}

.scribble path {
    fill: none;
    stroke: var(--red);
    stroke-linecap: round;
    stroke-linejoin: round;
}

.watermark {
    position: fixed;
    right: 15px;
    bottom: 7px;
    color: #b4b8ba;
    font-size: 12px;
    line-height: 18px;
}
```
